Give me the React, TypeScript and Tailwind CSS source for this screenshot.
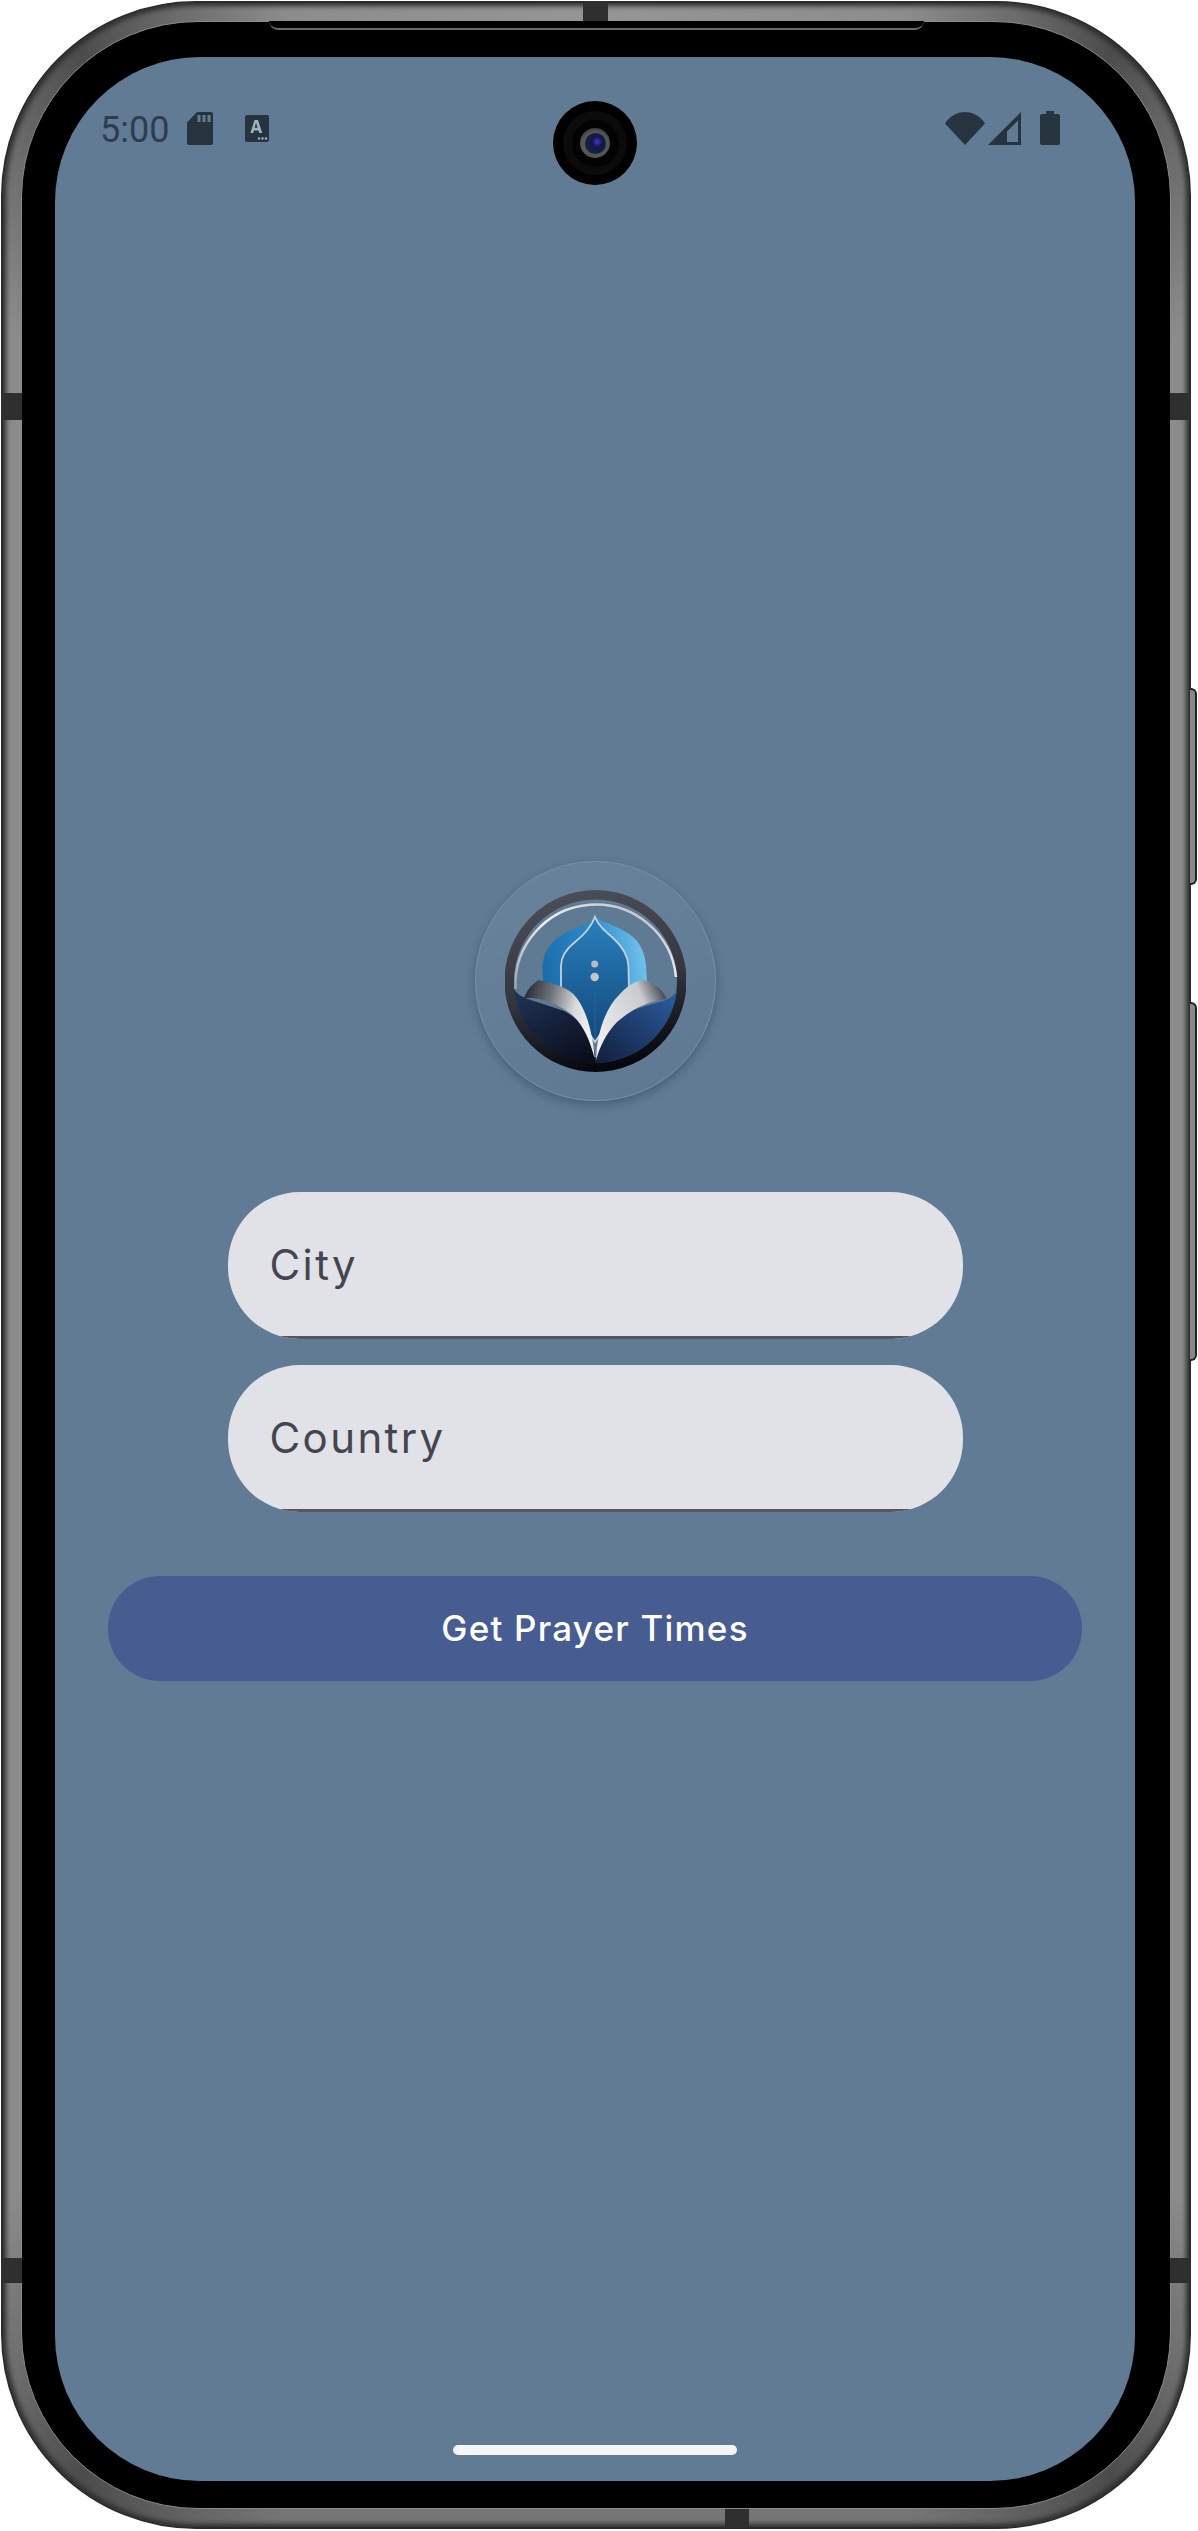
const statusColor = '#26343f'

function SdCard() {
  return (
    <svg width="26" height="33" viewBox="0 0 26 33" className="ml-[18px]">
      <path
        fill={statusColor}
        fillRule="evenodd"
        d="M10 0h14a2 2 0 0 1 2 2v29a2 2 0 0 1-2 2H2a2 2 0 0 1-2-2V10.500zM10.500 3v7h3V3zM15.500 3v7h3V3zM20.500 3v7h3V3z"
      />
    </svg>
  )
}

function KeyboardBadge() {
  return (
    <svg width="24" height="27" viewBox="0 0 24 27" className="ml-[32px]">
      <rect width="24" height="27" rx="2" fill={statusColor} />
      <path fill="#9fb0bf" d="M9.500 5h3.500l4.200 13h-3l-.7-2.600H8.900L8.200 18H5.400zM9.600 12.800h2.900l-1.450-5z" />
      <circle cx="14" cy="23.500" r="1.200" fill="#9fb0bf" />
      <circle cx="17.500" cy="23.500" r="1.200" fill="#9fb0bf" />
      <circle cx="21" cy="23.500" r="1.200" fill="#9fb0bf" />
    </svg>
  )
}

function StatusIcons() {
  return (
    <div className="flex items-center">
      <svg width="40" height="33" viewBox="0 0 40 33">
        <path fill={statusColor} d="M0 11.500C5 4 12 0 20 0s15 4 20 11.500L20 33z" />
      </svg>
      <svg width="33" height="33" viewBox="0 0 33 33" className="ml-[3px]">
        <path fill={statusColor} fillRule="evenodd" d="M33 0v33H0zM30 8.500L19 19.500V30h11z" />
      </svg>
      <svg width="20" height="34" viewBox="0 0 20 34" className="ml-[19px]">
        <path fill={statusColor} d="M6 0h8v3h4a2 2 0 0 1 2 2v27a2 2 0 0 1-2 2H2a2 2 0 0 1-2-2V5a2 2 0 0 1 2-2h4z" />
      </svg>
    </div>
  )
}

function Camera() {
  return (
    <div className="flex h-[84px] w-[84px] items-center justify-center rounded-full bg-black">
      <div className="flex h-[64px] w-[64px] items-center justify-center rounded-full bg-[#0b0b0b]">
        <div className="flex h-[47px] w-[47px] items-center justify-center rounded-full bg-[#030303]">
          <div className="flex h-[30px] w-[30px] items-center justify-center rounded-full bg-[radial-gradient(circle_at_50%_60%,#555_60%,#1c1c1c_100%)]">
            <div className="h-[21px] w-[21px] rounded-full bg-[radial-gradient(circle_at_58%_42%,#4a30d8_0%,#14174a_30%,#0c2a33_75%,#6a5090_100%)]" />
          </div>
        </div>
      </div>
    </div>
  )
}

function Logo() {
  return (
    <svg width="181" height="184" viewBox="0 0 181 184">
      <defs>
        <linearGradient id="ring" x1="0.3" y1="0" x2="0.5" y2="1">
          <stop offset="0" stopColor="#4c4e59" />
          <stop offset="0.55" stopColor="#33353f" />
          <stop offset="1" stopColor="#05060c" />
        </linearGradient>
        <linearGradient id="dome" x1="0" y1="0.4" x2="1" y2="0.2">
          <stop offset="0" stopColor="#1d6cab" />
          <stop offset="0.5" stopColor="#2a8acb" />
          <stop offset="1" stopColor="#78c6ee" />
        </linearGradient>
        <linearGradient id="arch" x1="0" y1="0" x2="0" y2="1">
          <stop offset="0" stopColor="#2a80bd" />
          <stop offset="1" stopColor="#11487c" />
        </linearGradient>
        <linearGradient id="waveLeft" x1="0" y1="0" x2="0.6" y2="1">
          <stop offset="0" stopColor="#22365c" />
          <stop offset="1" stopColor="#0a0e1c" />
        </linearGradient>
        <linearGradient id="waveRight" x1="1" y1="0" x2="0.2" y2="1">
          <stop offset="0" stopColor="#2c63a8" />
          <stop offset="1" stopColor="#141f3e" />
        </linearGradient>
        <linearGradient id="pageLeft" x1="0" y1="0" x2="1" y2="0.3">
          <stop offset="0" stopColor="#1d202b" />
          <stop offset="0.4" stopColor="#6f7279" />
          <stop offset="0.75" stopColor="#d9dade" />
          <stop offset="1" stopColor="#eeeef0" />
        </linearGradient>
        <linearGradient id="pageRight" x1="0" y1="0.8" x2="1" y2="0.3">
          <stop offset="0" stopColor="#f0f0f2" />
          <stop offset="0.75" stopColor="#c9cbcf" />
          <stop offset="1" stopColor="#50535d" />
        </linearGradient>
        <linearGradient id="arc" x1="0" y1="1" x2="1" y2="0">
          <stop offset="0" stopColor="#9aa3ad" />
          <stop offset="0.5" stopColor="#f2f2f4" />
          <stop offset="1" stopColor="#aeb6be" />
        </linearGradient>
        <clipPath id="inside">
          <circle cx="90.500" cy="92" r="82" />
        </clipPath>
      </defs>
      <circle cx="90.500" cy="92" r="91" fill="url(#ring)" />
      <circle cx="90.500" cy="92" r="81.500" fill="#5f7b94" />
      <path d="M10.500 100A80.500 80.500 0 0 1 171 88" fill="none" stroke="url(#arc)" strokeWidth="2.500" />
      <path
        d="M90 27c5 5 10 6 15 8 11 5 21 10 27 17 6 8 8 16 9 24l1 18-52 60-52-62c-1-10-1-19 2-27 4-9 10-15 18-20 9-5 18-7 24-10 3-2 6-5 8-8z"
        fill="url(#dome)"
      />
      <path
        d="M90 28c3 8 10 14 18 21 10 9 15 17 15.500 28l.5 26-34 50-34-50V77c0-10 5-17 14-24 9-7 16-15 20-25z"
        fill="url(#arch)"
        stroke="#c4d1dd"
        strokeWidth="1.800"
      />
      <line x1="90" y1="88" x2="90" y2="150" stroke="#2f5f88" strokeWidth="1.200" />
      <circle cx="89.700" cy="75" r="3.500" fill="#b5bcc4" />
      <circle cx="89.700" cy="88" r="4.200" fill="#c2c7ce" />
      <g clipPath="url(#inside)">
        <path d="M9 100c3 5 8 8 14 10l36 12c16 8 28 24 31 44v20H0z" fill="url(#waveLeft)" />
        <path d="M174 100c-4 5-8 9-13 11l-30 9c-16 7-36 20-40 46v20h92z" fill="url(#waveRight)" />
      </g>
      <path d="M19 109c3-8 8-14 15-18 10 2 20 5 29 10 14 8 24 34 27 70-5-20-12-36-24-46-14-11-30-17-47-16z" fill="url(#pageLeft)" />
      <path d="M162 110c-4-9-12-16-24-19-8 1-16 6-24 15-14 14-22 38-23 65 4-14 11-28 21-38 15-13 31-21 50-23z" fill="url(#pageRight)" />
      <path d="M90 168v15" stroke="#05070d" strokeWidth="1.500" />
    </svg>
  )
}

function Field({ label }: { label: string }) {
  return (
    <div className="flex h-[147px] w-[735px] flex-col overflow-hidden rounded-[72px] bg-[#e1e2e7]">
      <div className="flex flex-1 items-center pl-[42px]">
        <span className="text-[42px] tracking-[2.400px] text-[#44454f] [font-family:Inter,sans-serif]">{label}</span>
      </div>
      <div className="h-[3px] bg-[#55565f]" />
    </div>
  )
}

export default function App() {
  return (
    <div className="h-[2531px] w-[1198px] bg-white pt-px pl-px">
      <div className="relative h-[2528px] w-[1190px] rounded-[195px] border-2 border-[#2b2b2b] bg-[conic-gradient(#959595_0deg,#8c8c8c_14deg,#4c4c4c_23deg,#8c8c8c_32deg,#8c8c8c_148deg,#4c4c4c_157deg,#767676_166deg,#767676_194deg,#4c4c4c_203deg,#8c8c8c_212deg,#8c8c8c_328deg,#4c4c4c_337deg,#8c8c8c_346deg,#959595_360deg)] p-[18px] shadow-[inset_0_0_5px_3px_#2e2e2e]">
        {/* side keys */}
        <div className="absolute top-[685px] -right-[8px] h-[197px] w-[7px] rounded-r-[6px] border-y-2 border-r-2 border-[#222] bg-[#888]" />
        <div className="absolute top-[999px] -right-[8px] h-[359px] w-[7px] rounded-r-[6px] border-y-2 border-r-2 border-[#222] bg-[#888]" />

        {/* antenna bands */}
        <div className="absolute top-[390px] -left-[1px] h-[27px] w-[20px] bg-[#2f2f2f]" />
        <div className="absolute top-[390px] -right-[1px] h-[27px] w-[20px] bg-[#2f2f2f]" />
        <div className="absolute top-[2255px] -left-[1px] h-[25px] w-[20px] bg-[#2f2f2f]" />
        <div className="absolute top-[2255px] -right-[1px] h-[25px] w-[20px] bg-[#2f2f2f]" />
        <div className="absolute -top-[1px] left-[580px] h-[19px] w-[25px] bg-[#2f2f2f]" />
        <div className="absolute -bottom-[1px] left-[722px] h-[19px] w-[24px] bg-[#2f2f2f]" />

        {/* top notch of the bezel */}
        <div className="absolute top-[18px] left-[266px] h-[9px] w-[655px] rounded-b-[12px] border-b-2 border-[#6a6a6a] bg-black" />

        <div className="h-full w-full rounded-[177px] border border-[#8a8a8a] bg-black pt-[35px] pr-[33px] pb-[28px] pl-[33px]">
          <div className="flex h-[2424px] w-[1080px] flex-col items-center rounded-[145px] bg-[#607b93]">
            {/* status bar */}
            <div className="mt-[44px] grid h-[84px] w-full grid-cols-[1fr_auto_1fr]">
              <div className="flex items-start pt-[11px] pl-[45px]">
                <span className="text-[36px] leading-[36px] text-[#2c3e4e] [font-family:Roboto,sans-serif]">5:00</span>
                <SdCard />
                <div className="pt-[3px]">
                  <KeyboardBadge />
                </div>
              </div>
              <Camera />
              <div className="flex items-start justify-end pt-[10px] pr-[75px]">
                <StatusIcons />
              </div>
            </div>

            {/* logo */}
            <div className="mt-[676px] flex h-[240px] w-[241px] items-center justify-center rounded-full border border-[#7590a6] bg-[linear-gradient(160deg,#68839b,#5d7890)] shadow-[0_4px_10px_rgba(30,45,60,0.35)]">
              <Logo />
            </div>

            {/* form */}
            <div className="mt-[91px] flex flex-col gap-[26px]">
              <Field label="City" />
              <Field label="Country" />
            </div>

            <div className="mt-[64px] flex h-[105px] w-[974px] items-center justify-center rounded-[52px] bg-[#475c90]">
              <span className="text-[35px] font-medium tracking-[1.200px] text-white [font-family:Inter,sans-serif]">Get Prayer Times</span>
            </div>

            <div className="flex-1" />
            <div className="mb-[26px] h-[10px] w-[284px] rounded-[5px] bg-[#f4f5f7]" />
          </div>
        </div>
      </div>
    </div>
  )
}
